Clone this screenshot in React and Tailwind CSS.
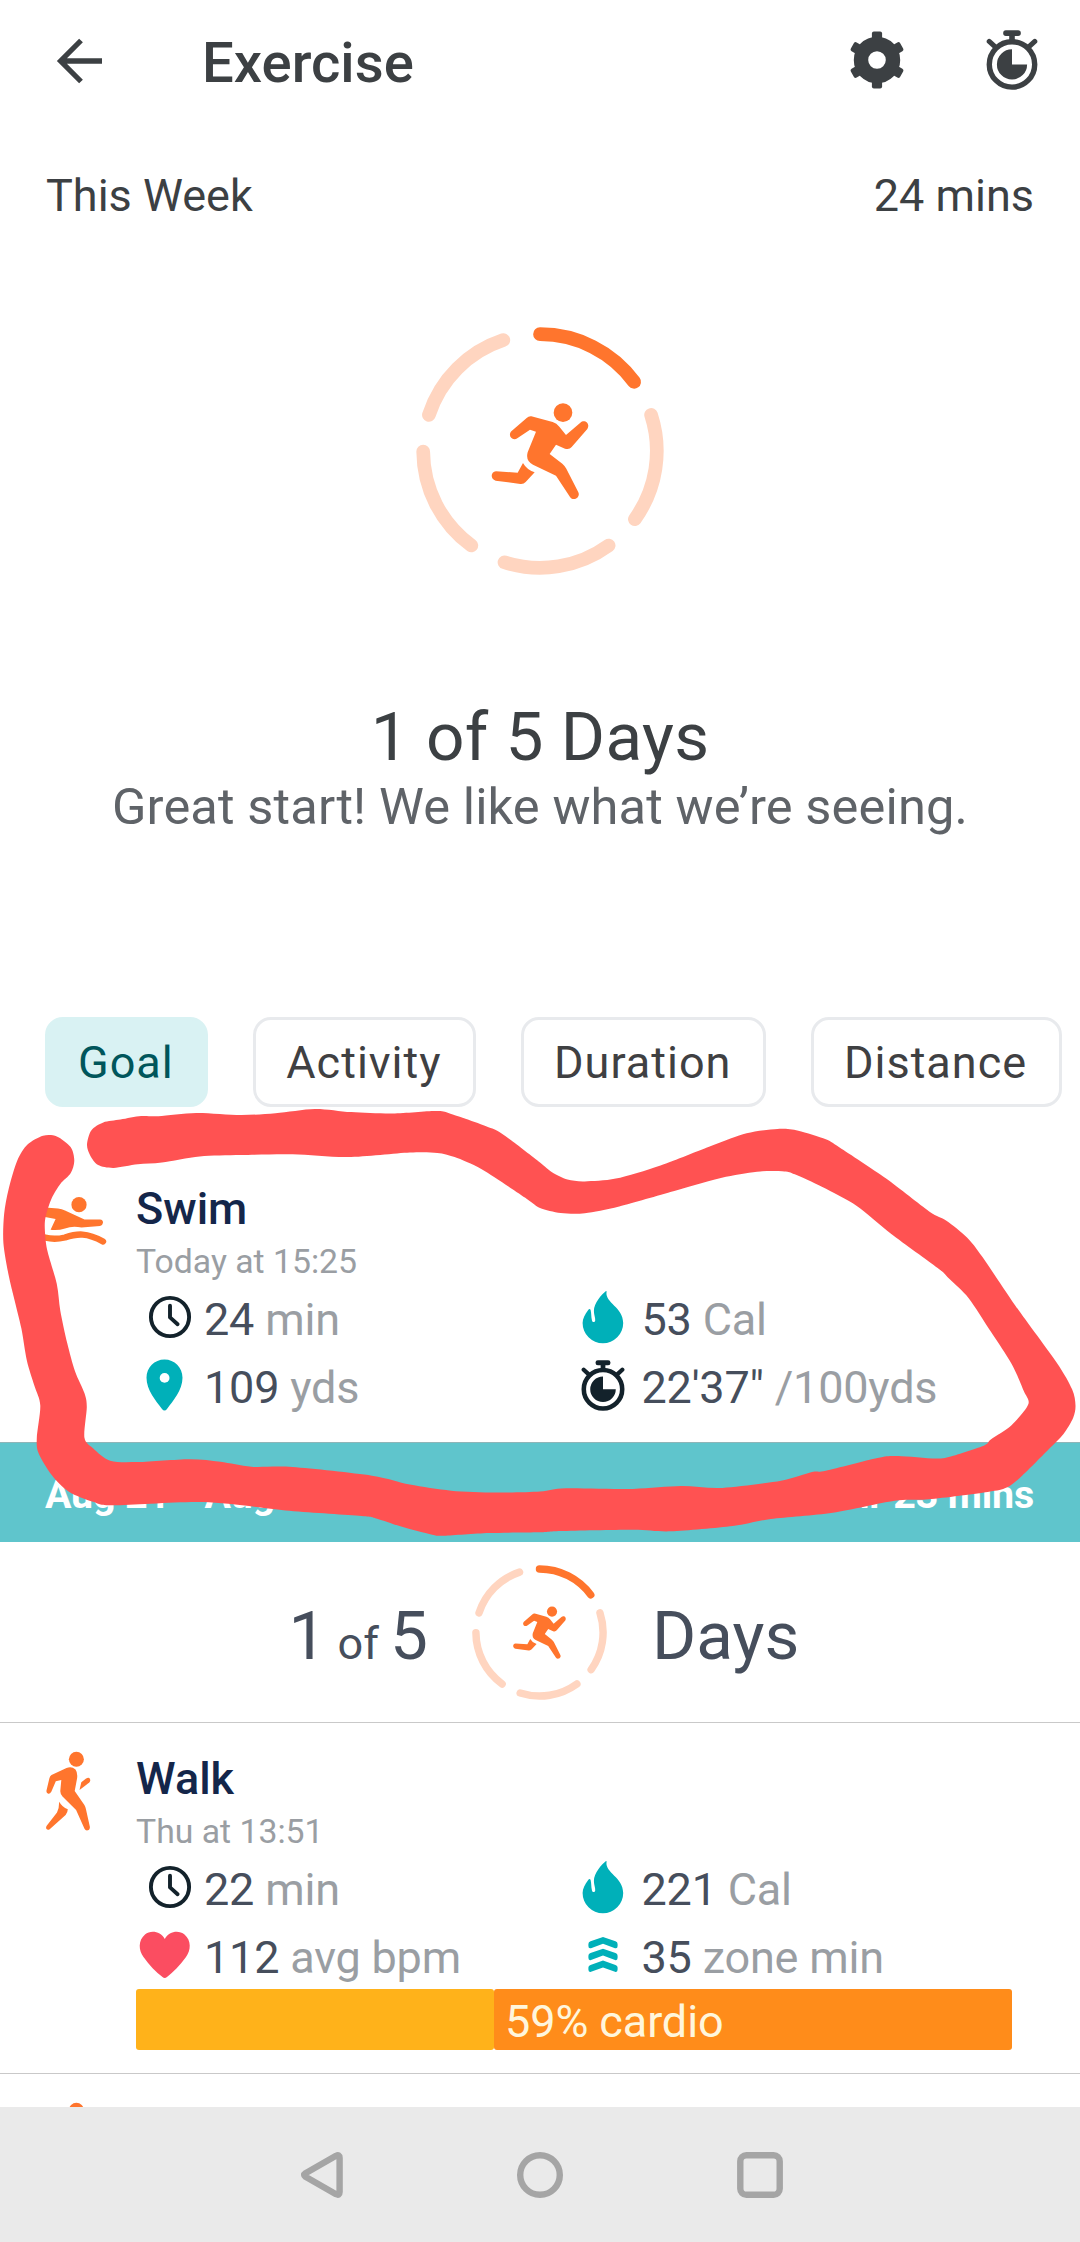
const GOAL_ARCS = [0, 72, 144, 216, 288]

const chips = ['Goal', 'Activity', 'Duration', 'Distance']

// outline of the red marker, clockwise from the left tip
const markerOutline = [
  [87, 1144.6], [91.3, 1130.4], [103.3, 1122.5], [120.5, 1119.6], [141.2, 1116.1], [158.4, 1116.2], [196.3, 1112.9], [241, 1115],
  [275.5, 1113.2], [315, 1108.9], [351.3, 1112.1], [392.6, 1113.6], [435.6, 1111.1], [451.1, 1113.9], [492.4, 1128.6], [509.7, 1139.3],
  [540, 1162.5], [552, 1172.2], [567.5, 1179.6], [584.8, 1181.4], [615.8, 1178.6], [660.5, 1165.4], [712.2, 1145.4], [746.6, 1133.2],
  [777.6, 1128.9], [798.3, 1130.7], [825.8, 1139.3], [839.6, 1147.5], [886.1, 1178.6], [929.2, 1211.4], [946.4, 1220.7], [967, 1237.5],
  [982.5, 1257.1], [1015.2, 1305.4], [1056.6, 1362.5], [1072.1, 1389.3], [1075.5, 1405.4], [1073.1, 1417.9], [1063.5, 1433.9],
  [1049.7, 1448.2], [1022.1, 1475.7], [1006.6, 1487.6], [987.7, 1492], [929.1, 1499.3], [894.7, 1500.7], [832.7, 1512.7],
  [770.7, 1519], [732.8, 1526], [670.9, 1531.3], [633, 1529.7], [560.7, 1531], [540, 1532.3], [489, 1533], [444.2, 1535.7],
  [432.2, 1534.7], [399.5, 1526], [377.1, 1518.7], [361.6, 1516], [289.3, 1510.7], [203.2, 1502], [113.6, 1505.3], [93, 1501.7],
  [68.9, 1491.7], [51.7, 1475], [38.6, 1453.3], [36.8, 1438], [40.3, 1405.4], [34.4, 1385.7], [26.9, 1360.7], [21.4, 1328.6],
  [14.5, 1300], [8.6, 1275], [3.4, 1242.9], [4.1, 1214.3], [8.6, 1189.3], [17.2, 1160.7], [27.5, 1144.6], [43, 1135.7],
  [56.8, 1136.4], [70.6, 1147.1], [74.3, 1160.7], [70.6, 1173.2], [60.3, 1183.9], [51.7, 1198.2], [45.8, 1216], [44.8, 1228.6],
  [47.2, 1250], [56.8, 1283.9], [60.3, 1310.7], [67.2, 1342.9], [75.1, 1371.4], [84.4, 1392.9], [86.8, 1407.1], [84.4, 1437.5],
  [93, 1448.2], [110.2, 1460.7], [137.8, 1462.1], [189.4, 1459.3], [220.4, 1461.8], [251.4, 1466.8], [292.7, 1467.1],
  [371.9, 1475.7], [409.8, 1484.6], [451.1, 1490.7], [495.9, 1492.5], [540, 1491.4], [565.8, 1488.2], [633, 1488.9],
  [681.2, 1486.1], [722.5, 1487.9], [781, 1480.7], [812, 1472.1], [825.8, 1470.7], [877.5, 1457.9], [898.1, 1456],
  [936, 1458.6], [953.2, 1455.7], [984.2, 1445.4], [991.1, 1439.3], [1011.8, 1425], [1028.3, 1404.3], [1023.8, 1391],
  [1011.8, 1364.3], [991.1, 1332.1], [968.7, 1298.2], [949.8, 1279.3], [937.7, 1267.9], [891.3, 1233.9], [856.8, 1206],
  [822.4, 1187.1], [794.8, 1174.3], [784.5, 1171.4], [760.4, 1171.4], [726, 1176.8], [674.3, 1191], [619.2, 1206.4],
  [584.8, 1213.2], [560.7, 1212.9], [540, 1207.9], [526.9, 1198.9], [482.1, 1169.6], [454.6, 1157.1], [437.4, 1152.9],
  [409.8, 1152.5], [347.8, 1157.1], [292.7, 1154.3], [241, 1155], [199.7, 1156.4], [161.9, 1162.5], [137.8, 1164.3],
  [113.6, 1167.9], [98.1, 1165], [90.2, 1155.4],
]

// Catmull-Rom through every point, so the edge passes exactly where it was drawn
const smoothPath = (pts) => {
  const n = pts.length
  let d = `M${pts[0][0]} ${pts[0][1]}`
  for (let i = 0; i < n; i++) {
    const [a, b, c, e] = [pts[(i + n - 1) % n], pts[i], pts[(i + 1) % n], pts[(i + 2) % n]]
    d += `C${b[0] + (c[0] - a[0]) / 7} ${b[1] + (c[1] - a[1]) / 7} ${c[0] - (e[0] - b[0]) / 7} ${c[1] - (e[1] - b[1]) / 7} ${c[0]} ${c[1]}`
  }
  return d + 'Z'
}

const arcPath = (start) => {
  const p = (deg) => {
    const t = (deg * Math.PI) / 180
    return `${124 + 116.8 * Math.sin(t)} ${124 - 116.8 * Math.cos(t)}`
  }
  return `M${p(start)}A116.8 116.8 0 0 1 ${p(start + 53.7)}`
}

function GoalRing({ className }) {
  return (
    <svg viewBox="0 0 248 248" className={className}>
      {GOAL_ARCS.map((a, i) => (
        <path key={a} d={arcPath(a)} fill="none" stroke={i === 0 ? '#ff752d' : '#ffd5c0'} strokeWidth="13.7" strokeLinecap="round" />
      ))}
      <g fill="#ff752d" transform="translate(-26 -26.7) scale(.33333)">
        <circle cx="519" cy="337" r="28" />
        <path d="M424 348L488 365Q500 369 508 379L528 404L571 367C584 355 602 370 592 386L545 440Q538 449 525 445L498 433L479 461L517 490Q524 496 529 505L565 576C572 591 551 605 540 590L498 526L429 493Q406 481 413 456L438 394L420 388L383 413C368 424 352 407 364 393L410 353Q416 347 424 348Z" />
        <path d="M399 488Q410 508 434 516L407 545Q401 552 391 551L317 541C301 537 301 515 318 513L383 517Z" />
      </g>
    </svg>
  )
}

function BackArrow() {
  return (
    <svg viewBox="0 0 48 48" className="w-12 h-12" fill="none" stroke="#3c4043" strokeWidth="5.3">
      <path d="M46 24H6M25 3.5L4.6 24L25 44.5" />
    </svg>
  )
}

function Gear() {
  return (
    <svg viewBox="-30 -30 60 60" className="w-[60px] h-[60px]" fill="#3c4043">
      {[0, 60, 120, 180, 240, 300].map(r => (
        <rect key={r} x="-5.1" y="-28.4" width="10.2" height="12" rx="2" transform={`rotate(${r})`} />
      ))}
      <circle r="16" fill="none" stroke="#3c4043" strokeWidth="14.4" />
    </svg>
  )
}

function Stopwatch({ className, color }) {
  return (
    <svg viewBox="0 0 52 60" className={className} fill={color}>
      <rect x="17.2" y="0.2" width="17.6" height="5.8" rx="2.7" />
      <rect x="23.2" y="4" width="5.6" height="7" />
      <path d="M3.2 11.4L9.5 17.2M48.8 11.4L42.5 17.2" stroke={color} strokeWidth="5" strokeLinecap="round" />
      <circle cx="26" cy="34.4" r="22.7" fill="none" stroke={color} strokeWidth="5.4" />
      <path d="M26 34.4V19.3A15.1 15.1 0 1 0 41.1 34.4Z" />
    </svg>
  )
}

const statIcons = {
  clock: (
    <g fill="none" stroke="#13222b" strokeWidth="3.9" strokeLinecap="round" strokeLinejoin="round">
      <circle cx="33" cy="28" r="19.1" />
      <path d="M33 16.8V28.4L40.6 35.2" />
    </g>
  ),
  pin: (
    <g>
      <path fill="#00b0b9" d="M27.5 2.6C17.5 2.6 9.5 10.6 9.5 20.8C9.5 33 19 44 25 52Q27.5 55 30 52C36 44 45.5 33 45.5 20.8C45.5 10.6 37.5 2.6 27.5 2.6Z" />
      <circle cx="27.6" cy="20.9" r="4.9" fill="#fff" />
    </g>
  ),
  flame: (
    <path fill="#00b0b9" d="M31 2C27 5 18.8 14 18.9 22C18.9 26 20.5 29 20.2 31.5C19.8 33.5 17.5 33.5 17 31.5C16 28 16.5 24 15.6 21C15 19.5 14 20 13.2 21C10 25 7.6 30 7.6 34A20.3 20.3 0 0 0 48.2 34C48.2 18 30 14 31.5 3Q31.8 1.6 31 2Z" />
  ),
  heart: (
    <path fill="#fb4d61" d="M27.8 12C32 4 42 3 47.5 7.5C54.5 13.5 54 23 49 30C43.5 38 36 45 30 50Q27.7 51.8 25.5 50C19 45 12 38 6.5 30C1.5 23 1 13.5 8 7.5C13.5 3 23.5 4 27.8 12Z" />
  ),
  zone: (
    <g fill="#00b0b9">
      {[0, 11.8, 23.6].map(y => (
        <path key={y} transform={`translate(0 ${y})`} d="M28 10L40.5 14.3Q42.6 15 42.6 17V19Q42.6 22 40 21.2L28 16.8L16 21.2Q13.4 22 13.4 19V17Q13.4 15 15.5 14.3Z" />
      ))}
    </g>
  ),
}

function StatIcon({ name }) {
  if (name === 'pace') {
    return (
      <div className="w-14 flex justify-center pb-1">
        <Stopwatch className="w-11 h-[51px]" color="#13222b" />
      </div>
    )
  }
  return <svg viewBox="0 0 56 60" className="w-14 h-[60px]">{statIcons[name]}</svg>
}

function WalkIcon() {
  return (
    <svg viewBox="0 0 62 80" className="w-[62px] h-20 shrink-0" fill="#ff752d">
      <circle cx="31.4" cy="8.3" r="7.5" />
      <path d="M6.5 24L21.5 16.9Q26.5 14.8 30.5 18.4Q32.8 21.5 32.1 27.3L29.7 40L39.4 54Q40.5 55.8 40.9 58L44.9 76Q44.9 79 42.8 79.3Q40.5 79.8 39.5 77.8L31.1 59L17.5 45.5Q15.2 43 15.3 40L16.3 29L10.8 30.3L6.3 40.8Q5 43 3.2 42.7Q1 42 1.5 39.5L4.4 27.3Q5 25 6.5 24Z" />
      <path d="M34.5 39L36.3 31.3L41.1 27.5Q44 26 45 28Q45.6 30 44.3 31.5Z" />
      <path d="M14.2 50.7Q17 56 22.8 58.2Q22.8 61 20.6 64L4.7 78.3Q2.7 79.6 1.3 77.8Q.7 76.5 1.5 75L12 61.5Q14.2 57 14.2 50.7Z" />
    </svg>
  )
}

function SwimIcon() {
  return (
    <svg viewBox="0 0 62 80" className="w-[62px] h-20 shrink-0" fill="#ff752d">
      <circle cx="34" cy="23.7" r="7.6" />
      <path d="M0 26.5L13 27.6Q17 28 20 29.6L39.5 38.6L55 38.4Q58.2 38.6 58 41.8Q57.6 44.6 55 44.9L36.5 46.6Q28 44.5 20 47.4Q13 49.8 5.6 48.8L10.6 38L0 36Z" />
      <path d="M0 56.5Q9 59 20 56.5C32 52.5 42 51.5 58 60.5" fill="none" stroke="#ff752d" strokeWidth="6.4" strokeLinecap="round" />
    </svg>
  )
}

function Stat({ icon, value, unit }) {
  return (
    <div className="h-[68px] flex items-center gap-[11px] text-[45px] tracking-[-0.2px] whitespace-pre">
      <StatIcon name={icon} />
      <p className="pt-0.5"><span className="text-[#464e5c]">{value}</span><span className="text-[#9a9ea3]"> {unit}</span></p>
    </div>
  )
}

function ActivityRow({ icon, name, when, stats, children }) {
  return (
    <div className="flex pl-[45px] pt-[29px]">
      {icon}
      <div className="ml-[29px] pt-1 w-[876px]">
        <p className="h-[47px] leading-[47px] text-[45px] font-medium text-[#14264a]">{name}</p>
        <p className="h-[53px] leading-[60px] text-[33.75px] text-[#9a9ea3]">{when}</p>
        <div className="grid grid-cols-2 pl-px">
          {stats.map(s => <Stat key={s.unit} {...s} />)}
        </div>
        {children}
      </div>
    </div>
  )
}

export default function App() {
  return (
    <div className="relative w-[1080px] h-[2242px] overflow-hidden bg-white flex flex-col font-['Roboto',sans-serif] text-[#3c4043]">
      <header className="h-[127px] shrink-0 flex items-center pl-14 pr-[42px]">
        <div className="self-start mt-[37px]"><BackArrow /></div>
        <h1 className="ml-[98px] text-[56.25px] leading-none font-medium flex-1">Exercise</h1>
        <div className="self-start mt-[30px] flex gap-[79px]">
          <Gear />
          <Stopwatch className="w-[52px] h-[60px]" color="#3c4043" />
        </div>
      </header>

      <div className="h-[138px] shrink-0 flex items-center justify-between px-[46px] text-[45px]">
        <p>This Week</p>
        <p>24 mins</p>
      </div>

      {/* Weekly goal */}
      <section className="h-[752px] shrink-0 flex flex-col items-center pt-[62px]">
        <GoalRing className="w-[248px] h-[248px]" />
        <h2 className="mt-[122px] h-20 leading-[80px] text-[67.5px] tracking-[0.3px]">1 of 5 Days</h2>
        <p className="h-[60px] leading-[60px] text-[50.6px] tracking-[0.12px] text-[#5f6368] whitespace-nowrap">Great start! We like what we’re seeing.</p>
      </section>

      <div className="h-[135px] shrink-0 flex items-start gap-[45px] pl-[45px]">
        {chips.map((c, i) => (
          <button key={c}
            className={`h-[90px] shrink-0 pl-[30px] pr-[31.5px] pt-0.5 rounded-[18px] border-3 text-[45px] tracking-[1px] ${i === 0 ? 'bg-[#d9f2f3] border-[#d9f2f3] text-[#00565b]' : 'bg-white border-[#e8eaed] text-[#3f4042]'}`}>{c}</button>
        ))}
      </div>

      <div className="h-[290px] shrink-0">
        <ActivityRow icon={<SwimIcon />} name="Swim" when="Today at 15:25"
          stats={[
            { icon: 'clock', value: '24', unit: 'min' },
            { icon: 'flame', value: '53', unit: 'Cal' },
            { icon: 'pin', value: '109', unit: 'yds' },
            { icon: 'pace', value: '22\'37"', unit: '/100yds' },
          ]} />
      </div>

      {/* Previous week */}
      <div className="h-[100px] shrink-0 flex items-center justify-between pl-[45px] pr-[46px] pt-1 bg-[#5fc5cc] border-t border-[#8fb5b8] text-[39.4px] tracking-[-0.15px] font-bold text-white">
        <p>Aug 21 - Aug 27</p>
        <p>1 hr 23 mins</p>
      </div>
      <div className="h-[180px] shrink-0 flex items-center text-[67.5px] text-[#464e5c] leading-none">
        <p className="flex-1 text-right pr-[44px] pt-2 whitespace-pre">1<span className="text-[45px]"> of </span>5</p>
        <GoalRing className="w-[135px] h-[135px]" />
        <p className="flex-1 pl-[45px] pt-2">Days</p>
      </div>

      <div className="h-[351px] shrink-0 shadow-[inset_0_1px_0_#c9c9c9]">
        <ActivityRow icon={<WalkIcon />} name="Walk" when="Thu at 13:51"
          stats={[
            { icon: 'clock', value: '22', unit: 'min' },
            { icon: 'flame', value: '221', unit: 'Cal' },
            { icon: 'heart', value: '112', unit: 'avg bpm' },
            { icon: 'zone', value: '35', unit: 'zone min' },
          ]}>
          <div className="-mt-0.5 flex h-[61px] text-[45px] leading-[65px] tracking-[-0.1px] text-[#fff6dc]">
            <div className="w-[358px] rounded-[3px] bg-[#ffb21a]" />
            <div className="flex-1 rounded-[3px] bg-[#ff8c1a] pl-[11px]">59% cardio</div>
          </div>
        </ActivityRow>
      </div>
      <div className="h-[34px] shrink-0 overflow-hidden shadow-[inset_0_1px_0_#c9c9c9] pl-[45px] pt-[29px]">
        <WalkIcon />
      </div>

      {/* System navigation */}
      <nav className="flex-1 bg-[#eaeaea] flex justify-center gap-[170px] pt-[42px]">
        {[
          <path key="back" d="M10.5 24.2L41 6.8Q44.6 5.2 44.6 9V43Q44.6 46.8 41 45.2L10.5 27.8Q7.8 26 10.5 24.2Z" />,
          <circle key="home" cx="25" cy="26" r="19.8" />,
          <rect key="recent" x="5.3" y="6.3" width="39.4" height="39.4" rx="6" />,
        ].map(shape => (
          <svg key={shape.key} viewBox="0 0 50 52" className="w-[50px] h-[52px]" fill="none" stroke="#a5a5a5" strokeWidth="6.4" strokeLinejoin="round">{shape}</svg>
        ))}
      </nav>

      <svg viewBox="0 0 1080 2242" className="absolute inset-0 w-[1080px] h-[2242px] pointer-events-none">
        <path d={smoothPath(markerOutline)} fill="#ff5252" />
      </svg>
    </div>
  )
}
